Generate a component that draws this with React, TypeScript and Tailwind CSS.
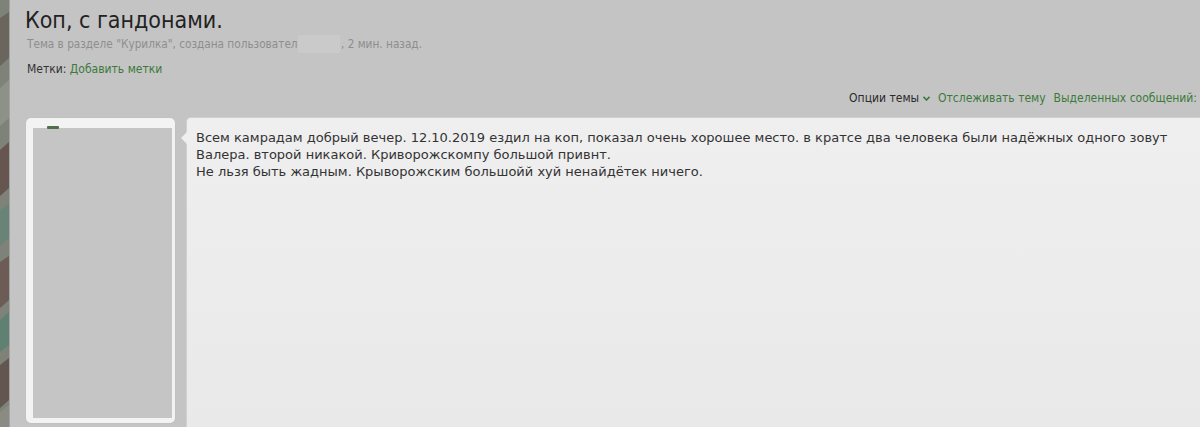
import React from 'react';

function CamoStrip() {
  return (
    <svg width="9" height="427" viewBox="0 0 9 427" preserveAspectRatio="none" className="block shrink-0">
      <rect width="9" height="427" fill="#7e8279" />
      <path d="M0 18 L9 12 L9 58 L0 66 Z" fill="#6a665e" />
      <path d="M0 88 L9 80 L9 118 L0 126 Z" fill="#8e9188" />
      <path d="M0 150 L9 142 L9 188 L0 196 Z" fill="#67554f" />
      <path d="M0 210 L9 204 L9 238 L0 246 Z" fill="#6a8378" />
      <path d="M0 262 L9 256 L9 300 L0 308 Z" fill="#6d5b55" />
      <path d="M0 320 L9 312 L9 345 L0 352 Z" fill="#5f8173" />
      <path d="M0 365 L9 358 L9 400 L0 408 Z" fill="#63554f" />
      <path d="M0 412 L9 405 L9 427 L0 427 Z" fill="#8a8c84" />
    </svg>
  );
}

export default function App() {
  return (
    <div className="flex h-[427px] w-[1200px] overflow-hidden bg-[#c4c4c4]">
      <CamoStrip />
      <div className="w-px shrink-0 bg-[#a2a2a2]" />
      <div className="flex min-w-0 flex-1 flex-col pt-[6px] pl-[15px]">
        {/* Thread header */}
        <h1 className="text-[23px] leading-[28px] text-[#222] font-['DejaVu_Sans_Condensed','DejaVu_Sans',sans-serif]">
          Коп, с гандонами.
        </h1>
        <p className="mt-[1px] ml-[2px] flex items-center text-[11.7px] leading-[18px] text-[#8e8e8e] font-['DejaVu_Sans_Condensed','DejaVu_Sans',sans-serif]">
          <span>Тема в разделе "Курилка", создана пользователем</span>
          <span className="inline-block h-[18px] w-[42px] -ml-[14px] mr-[1px] bg-[#cacaca]" />
          <span>, 2 мин. назад.</span>
        </p>
        <p className="mt-[8px] ml-[2px] text-[12px] leading-[16px] text-[#333] font-['DejaVu_Sans_Condensed','DejaVu_Sans',sans-serif]">
          Метки: <span className="text-[#3b7a3b]">Добавить метки</span>
        </p>

        {/* Thread controls */}
        <div className="mt-[13px] flex justify-end gap-[8px] pr-[3px] text-[12px] leading-[16px] font-['DejaVu_Sans_Condensed','DejaVu_Sans',sans-serif]">
          <span className="flex items-center gap-[4px] text-[#2a2a2a]">
            Опции темы
            <svg width="7" height="5" viewBox="0 0 7 5"><path d="M0.5 0.8 L3.5 4 L6.5 0.8" fill="none" stroke="#3b7a3b" strokeWidth="1.6" /></svg>
          </span>
          <span className="text-[#3b7a3b]">Отслеживать тему</span>
          <span className="text-[#3b7a3b]">Выделенных сообщений:</span>
        </div>

        {/* Post */}
        <div className="mt-[11px] flex min-h-0 flex-1">
          <div className="mt-[1px] mb-[4px] ml-[1px] flex w-[149px] shrink-0 flex-col rounded-[5px] bg-[#f3f3f3] pt-[10px] pr-[3px] pb-[5px] pl-[7px] shadow-[0_0_0_1px_#bfc3bf]">
            <div className="relative flex-1 bg-[#c5c5c5]">
              <div className="absolute -top-[2px] left-[14px] h-[3px] w-[12px] rounded-[1px] bg-[#4f6f4f]" />
            </div>
          </div>
          <div className="relative ml-[11px] flex-1 rounded-tl-[5px] border-t border-l border-[#d0d0d0] bg-[linear-gradient(#efefef,#e9e9e9)] pt-[11px] pl-[9px]">
            <div className="absolute -left-[6px] top-[14px] h-0 w-0 border-y-[6px] border-r-[6px] border-y-transparent border-r-[#efefef]" />
            <div className="text-[13px] leading-[17px] text-[#333] font-['DejaVu_Sans',sans-serif]">
              Всем камрадам добрый вечер. 12.10.2019 ездил на коп, показал очень хорошее место. в кратсе два человека были надёжных одного зовут
              <br />
              Валера. второй никакой. Криворожскомпу большой привнт.
              <br />
              Не льзя быть жадным. Крыворожским большойй хуй ненайдётек ничего.
            </div>
          </div>
        </div>
      </div>
    </div>
  );
}
